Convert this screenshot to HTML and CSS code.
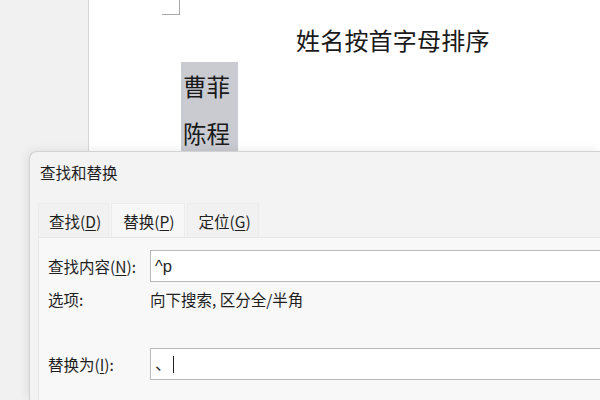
FILE: index.html
```html
<!DOCTYPE html>
<html lang="zh">
<head>
<meta charset="utf-8">
<link rel="stylesheet" href="styles.css">
</head>
<body>
<div class="app">
  <div class="gutter"></div>
  <div class="page">
    <div class="crop-mark"></div>
    <h1 class="heading">姓名按首字母排序</h1>
    <div class="names">
      <p class="name">曹菲</p>
      <p class="name">陈程</p>
    </div>
  </div>
</div>

<div class="dialog">
  <div class="dialog-title">查找和替换</div>
  <div class="tabs">
    <div class="tab">查找(<u>D</u>)</div>
    <div class="tab tab-active">替换(<u>P</u>)</div>
    <div class="tab">定位(<u>G</u>)</div>
  </div>
  <div class="panel">
    <div class="row row-field">
      <label class="label">查找内容(<u>N</u>):</label>
      <div class="field">^p</div>
    </div>
    <div class="row row-options">
      <span class="label">选项:</span>
      <span class="options">向下搜索, 区分全/半角</span>
    </div>
    <div class="row row-field row-replace">
      <label class="label">替换为(<u>I</u>):</label>
      <div class="field">、<span class="caret"></span></div>
    </div>
  </div>
</div>
</body>
</html>
```

FILE: styles.css
```css
html, body {
  margin: 0;
  padding: 0;
  width: 600px;
  height: 400px;
  overflow: hidden;
  background: #ffffff;
  font-family: "Noto Sans CJK SC", "Noto Sans", sans-serif;
  color: #1f1f1f;
}

.app {
  display: flex;
  height: 400px;
}

.gutter {
  width: 88px;
  flex: none;
  background: #f1f1f1;
  border-right: 1px solid #d6d6d6;
}

.page {
  flex: 1;
  background: #ffffff;
}

.crop-mark {
  width: 17px;
  height: 14px;
  margin-left: 73px;
  border-right: 1px solid #a8a8a8;
  border-bottom: 1px solid #a8a8a8;
}

.heading {
  margin: 8px 0 0 207px;
  font-size: 24px;
  font-weight: 400;
  line-height: 34px;
  letter-spacing: 0.2px;
  color: #1a1a1a;
}

.names {
  margin: 5px 0 0 92px;
  width: 57px;
  height: 100px;
  background: #c9cbd1;
}

.name {
  margin: 0;
  padding-left: 2px;
  font-size: 23.5px;
  line-height: 47px;
  color: #1a1a1a;
}

.name:first-child {
  padding-top: 1px;
}

.dialog {
  position: absolute;
  left: 29px;
  top: 151px;
  right: 0;
  bottom: 0;
  background: #f3f3f3;
  border-top: 1px solid #d2d2d2;
  border-left: 1px solid #d2d2d2;
  border-radius: 8px 0 0 0;
  box-shadow: -2px -1px 10px rgba(0, 0, 0, 0.08);
  display: flex;
  flex-direction: column;
}

.dialog-title {
  padding: 9px 0 0 10px;
  height: 51px;
  box-sizing: border-box;
  font-size: 15.5px;
  line-height: 22px;
  color: #1f1f1f;
}

.tabs {
  display: flex;
  gap: 2px;
  margin-left: 8px;
  height: 34px;
  flex: none;
}

.tab {
  box-sizing: border-box;
  padding: 0 7px 0 10px;
  font-size: 15.5px;
  line-height: 34px;
  color: #1f1f1f;
  background: #f1f1f1;
  border: 1px solid #ececec;
  border-bottom: none;
}

.tab u {
  text-decoration-thickness: 1px;
  text-underline-offset: 2px;
}

.tab-active {
  background: #f7f7f7;
  padding: 0 10px 0 11px;
}

.panel {
  flex: 1;
  margin-left: 8px;
  background: #f8f8f8;
  border-top: 1px solid #e6e6e6;
  border-left: 1px solid #e6e6e6;
  padding: 12px 0 0 9px;
}

.row {
  display: flex;
  align-items: center;
}

.label {
  width: 102px;
  flex: none;
  font-size: 15.5px;
  color: #1f1f1f;
}

.label u {
  text-underline-offset: 2px;
}

.field {
  flex: 1;
  box-sizing: border-box;
  height: 32px;
  background: #ffffff;
  border: 1px solid #b9b9b9;
  border-right: none;
  padding-left: 4px;
  font-family: "Liberation Sans", "Noto Sans CJK SC", sans-serif;
  font-size: 16.5px;
  line-height: 30px;
  color: #1f1f1f;
  display: flex;
  align-items: center;
}

.row-options {
  height: 34px;
}

.options {
  font-size: 15.5px;
  color: #1f1f1f;
}

.row-replace {
  margin-top: 32px;
}

.caret {
  display: inline-block;
  width: 0;
  height: 17px;
  margin-left: 1px;
  border-left: 1.5px solid #1f1f1f;
}
```
